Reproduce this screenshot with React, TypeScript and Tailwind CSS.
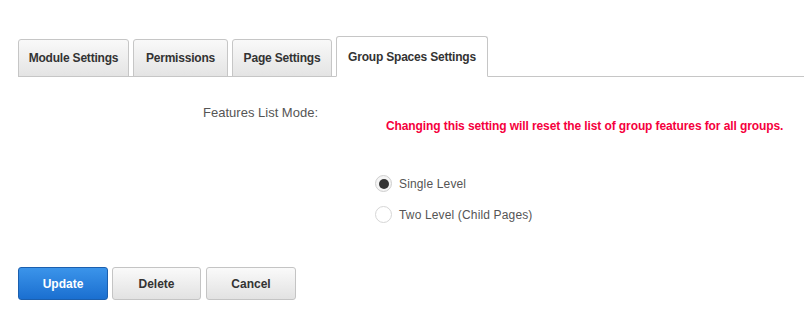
import React from "react";

const tabs = [
  { t: "Module Settings", w: "w-[111px]" },
  { t: "Permissions", w: "w-[95px]" },
  { t: "Page Settings", w: "w-[100px]" },
];

export default function App() {
  return (
    <div className="w-[804px] h-[331px] bg-white text-[12px] text-[#333]" style={{ fontFamily: '"Liberation Sans", Arial, sans-serif' }}>
      <div className="pt-[36px] pl-[18px]">
        <div className="flex items-end gap-[4px] border-b border-[#c6c6c6] h-[41px]">
          {tabs.map((x) => (
            <div
              key={x.t}
              className={`${x.w} h-[38px] -mb-px flex items-center justify-center font-bold rounded-t-[3px] border border-[#c6c6c6] bg-gradient-to-b from-[#f9f9f9] to-[#e4e4e4] text-[#333] tracking-[-0.2px]`}
            >
              {x.t}
            </div>
          ))}
          <div className="w-[152px] h-[41px] -mb-px flex items-center justify-center font-bold rounded-t-[3px] border border-[#c6c6c6] border-b-white bg-white text-[#333] tracking-[-0.2px]">
            Group Spaces Settings
          </div>
        </div>
      </div>

      <div className="flex mt-[24px]">
        <div className="w-[318px] text-right text-[#555] text-[13px] leading-[14px] pt-[5px]">Features List Mode:</div>
        <div className="ml-[57px] flex flex-col">
          <div className="pl-[11px] pt-[18px] font-bold text-[#f5003d] leading-[14px] tracking-[-0.1px]">
            Changing this setting will reset the list of group features for all groups.
          </div>
          <div className="mt-[42px] flex flex-col gap-[14px]">
            <label className="flex items-center gap-[7px] text-[#555] h-[17px] tracking-[0.15px]">
              <span className="w-[17px] h-[17px] rounded-full border border-[#cfcfcf] bg-[#f4f4f4] flex items-center justify-center">
                <span className="w-[10px] h-[10px] rounded-full bg-[#333]" />
              </span>
              Single Level
            </label>
            <label className="flex items-center gap-[7px] text-[#555] h-[17px] tracking-[0.15px]">
              <span className="w-[17px] h-[17px] rounded-full border border-[#d6d6d6] bg-white" />
              Two Level (Child Pages)
            </label>
          </div>
        </div>
      </div>

      <div className="flex pl-[18px] mt-[44px]">
        <button className="w-[90px] h-[33px] rounded-[3px] border border-[#1b5fae] bg-gradient-to-b from-[#3b94ea] to-[#1a6fd0] text-white font-bold text-[12px]">
          Update
        </button>
        <button className="ml-[4px] w-[89px] h-[33px] rounded-[3px] border border-[#c4c4c4] bg-gradient-to-b from-[#fafafa] to-[#e2e2e2] text-[#333] font-bold text-[12px]">
          Delete
        </button>
        <button className="ml-[5px] w-[90px] h-[33px] rounded-[3px] border border-[#c4c4c4] bg-gradient-to-b from-[#fafafa] to-[#e2e2e2] text-[#333] font-bold text-[12px]">
          Cancel
        </button>
      </div>
    </div>
  );
}
